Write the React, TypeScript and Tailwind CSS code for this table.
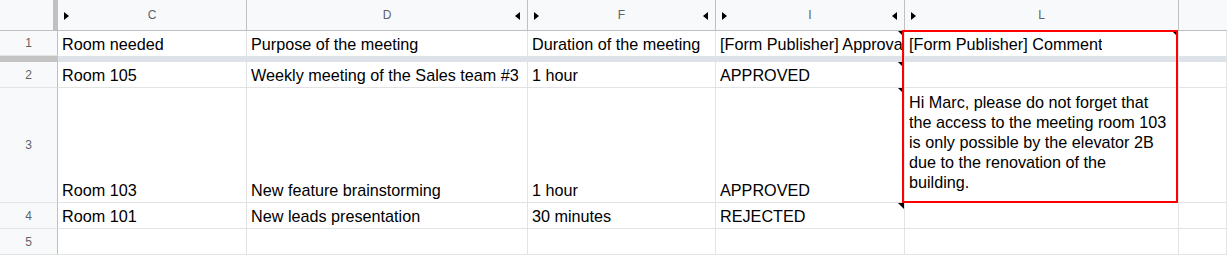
import React from "react";

const GRID = "border-[#e2e3e3]";

type Cell = { text?: string; lines?: string[]; note?: boolean };

function RightArrow() {
  return <span className="inline-block h-0 w-0 border-y-[4px] border-y-transparent border-l-[5px] border-l-black" />;
}
function LeftArrow() {
  return <span className="inline-block h-0 w-0 border-y-[4px] border-y-transparent border-r-[5px] border-r-black" />;
}

function ColHeader({ label, left, right }: { label: string; left?: boolean; right?: boolean }) {
  return (
    <div className="relative flex items-center justify-center border-r border-b border-[#c0c0c0] bg-[#f8f9fa] text-[12px] text-[#5f6368]">
      {left && (
        <span className="absolute left-[6px] top-[12px] flex">
          <RightArrow />
        </span>
      )}
      <span>{label}</span>
      {right && (
        <span className="absolute right-[7px] top-[12px] flex">
          <LeftArrow />
        </span>
      )}
    </div>
  );
}

function RowHeader({ n }: { n: number }) {
  return (
    <div className="flex items-center justify-center border-r border-b border-r-[#c0c0c0] border-b-[#e2e3e3] bg-[#f8f9fa] text-[12px] text-[#5f6368]">
      {n}
    </div>
  );
}

function DataCell({ cell, noBottom }: { cell: Cell; noBottom?: boolean }) {
  const wrapped = !!cell.lines;
  return (
    <div
      className={`relative flex overflow-hidden border-r ${noBottom ? "" : "border-b"} ${GRID} bg-white text-[16.2px] text-black ${
        wrapped ? "flex-col items-start pt-[4px] pr-[7px] pl-[4px] leading-[20px]" : "items-end pb-[3px] pl-[4px] leading-[18px] whitespace-nowrap"
      }`}
    >
      {cell.text && <span className="min-w-0 overflow-hidden">{cell.text}</span>}
      {cell.lines?.map((l, i) => (
        <span key={i} className="whitespace-nowrap">
          {l}
        </span>
      ))}
      {cell.note && (
        <span className="absolute top-0 right-0 h-0 w-0 border-t-[6px] border-l-[6px] border-t-black border-l-transparent" />
      )}
    </div>
  );
}

const rows: { n: number; cells: Cell[] }[] = [
  {
    n: 1,
    cells: [
      { text: "Room needed" },
      { text: "Purpose of the meeting" },
      { text: "Duration of the meeting" },
      { text: "[Form Publisher] Approval status", note: true },
      { text: "[Form Publisher] Comment", note: true },
      {},
    ],
  },
  {
    n: 2,
    cells: [
      { text: "Room 105" },
      { text: "Weekly meeting of the Sales team #3" },
      { text: "1 hour" },
      { text: "APPROVED", note: true },
      {},
      {},
    ],
  },
  {
    n: 3,
    cells: [
      { text: "Room 103" },
      { text: "New feature brainstorming" },
      { text: "1 hour" },
      { text: "APPROVED", note: true },
      {
        lines: [
          "Hi Marc, please do not forget that",
          "the access to the meeting room 103",
          "is only possible by the elevator 2B",
          "due to the renovation of the",
          "building.",
        ],
      },
      {},
    ],
  },
  {
    n: 4,
    cells: [
      { text: "Room 101" },
      { text: "New leads presentation" },
      { text: "30 minutes" },
      { text: "REJECTED", note: true },
      {},
      {},
    ],
  },
  { n: 5, cells: [{}, {}, {}, {}, {}, {}] },
];

export default function App() {
  return (
    <div
      className="relative h-[255px] w-[1227px] overflow-hidden bg-white"
      style={{ fontFamily: '"Liberation Sans", Arial, sans-serif' }}
    >
      <div className="grid grid-cols-[58px_189px_281px_188px_189px_274px_1fr] grid-rows-[31px_25px_6px_26px_115px_26px_26px]">
        {/* column header row */}
        <div className="border-r-[5px] border-b border-[#c0c0c0] bg-[#f8f9fa]" />
        <ColHeader label="C" left />
        <ColHeader label="D" right />
        <ColHeader label="F" left right />
        <ColHeader label="I" left right />
        <ColHeader label="L" left />
        <div className="border-b border-[#c0c0c0] bg-[#f8f9fa]" />

        {/* row 1 (frozen) */}
        <RowHeader n={1} />
        {rows[0].cells.map((c, i) => (
          <DataCell key={i} cell={c} noBottom />
        ))}

        {/* freeze divider */}
        <div className="bg-[#c4c4c4]" />
        <div className="col-span-6 bg-[#dde1e8]" />

        {rows.slice(1).map((r) => (
          <React.Fragment key={r.n}>
            <RowHeader n={r.n} />
            {r.cells.map((c, i) => (
              <DataCell key={i} cell={c} />
            ))}
          </React.Fragment>
        ))}
      </div>

      {/* selected range outline */}
      <div className="pointer-events-none absolute top-[30px] left-[902px] h-[173px] w-[276px] border-2 border-[#ff0000]" />
    </div>
  );
}
